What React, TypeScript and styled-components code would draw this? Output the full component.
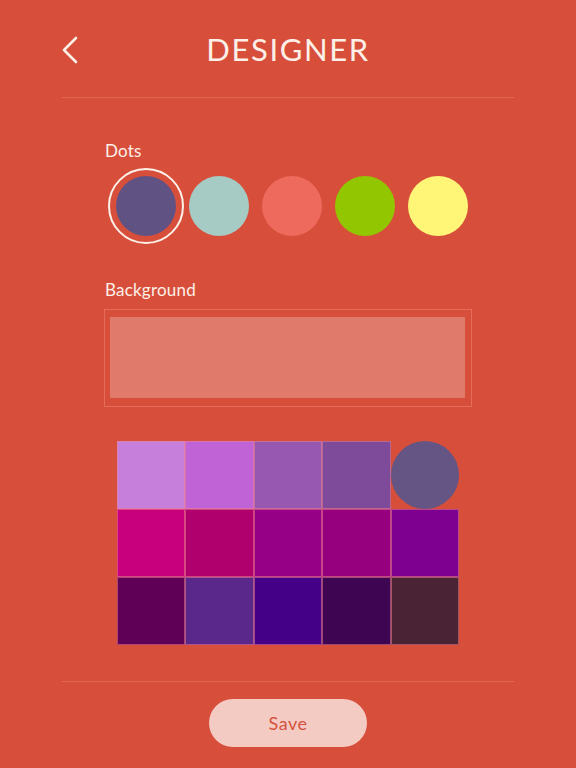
import React, { useState } from 'react'
import styled, { createGlobalStyle } from 'styled-components'

const GlobalStyle = createGlobalStyle`
   html, body {
      margin: 0;
      padding: 0;
      background: #d74f3b;
   }
   * {
      box-sizing: border-box;
   }
`

const Screen = styled.div`
   width: 576px;
   height: 768px;
   background: #d74f3b;
   font-family: Lato, 'Open Sans', sans-serif;
   color: #fcf0e8;
   overflow: hidden;
`

const Header = styled.header`
   position: relative;
   height: 97px;
   display: flex;
   align-items: center;
   justify-content: center;
`

const BackButton = styled.button`
   position: absolute;
   left: 58px;
   top: 34px;
   width: 24px;
   height: 32px;
   padding: 0;
   border: none;
   background: none;
   display: flex;
   align-items: center;
   justify-content: center;
   cursor: pointer;
`

const Title = styled.h1`
   margin: 0;
   font-size: 31px;
   font-weight: 400;
   letter-spacing: 1.6px;
   line-height: 1;
   padding-top: 2px;
`

const Divider = styled.hr`
   margin: 0 62px;
   border: none;
   height: 1px;
   background: #e1664f;
`

const Content = styled.main`
   padding: 43px 0 0 105px;
`

const Label = styled.div`
   font-size: 17px;
   line-height: 20px;
   letter-spacing: 0.2px;
`

const DotRow = styled.div`
   display: flex;
   gap: 13px;
   margin: 15px 0 0 11px;
`

const Dot = styled.button<{ $color: string; $selected?: boolean }>`
   position: relative;
   width: 60px;
   height: 60px;
   padding: 0;
   border: none;
   border-radius: 50%;
   background: ${(p) => p.$color};
   cursor: pointer;

   &::after {
      content: '';
      display: ${(p) => (p.$selected ? 'block' : 'none')};
      position: absolute;
      inset: -8px;
      border: 2.5px solid #fcf0e8;
      border-radius: 50%;
   }
`

const BackgroundLabel = styled(Label)`
   margin-top: 44px;
`

const Swatch = styled.div`
   width: 368px;
   height: 98px;
   margin: 9px 0 0 -1px;
   padding: 7px 6px 8px 5px;
   border: 1px solid #e56c5a;
`

const SwatchFill = styled.div<{ $color: string }>`
   width: 100%;
   height: 100%;
   background: ${(p) => p.$color};
`

const Palette = styled.div`
   display: grid;
   grid-template-columns: repeat(5, 68.4px);
   grid-auto-rows: 68px;
   margin: 34px 0 0 12px;
`

const Cell = styled.button<{ $color: string; $selected?: boolean }>`
   padding: 0;
   border: ${(p) => (p.$selected ? 'none' : '0.5px solid rgba(238, 128, 140, 0.55)')};
   border-radius: ${(p) => (p.$selected ? '50%' : '0')};
   background: ${(p) => p.$color};
   cursor: pointer;
`

const Footer = styled.footer`
   margin-top: 36px;
`

const SaveRow = styled.div`
   display: flex;
   justify-content: center;
   padding-top: 17px;
`

const SaveButton = styled.button`
   width: 158px;
   height: 48px;
   border: none;
   border-radius: 24px;
   background: #f4cbc3;
   color: #d4523f;
   font-family: Lato, 'Open Sans', sans-serif;
   font-size: 18px;
   letter-spacing: 0.5px;
   cursor: pointer;
`

const dotColors = ['#615284', '#a5cbc4', '#ee6a5d', '#92c600', '#fff677']

const paletteColors = [
   '#c77fdc', '#bf63d6', '#9658b0', '#7e4a9a', '#655584',
   '#c8007e', '#b0006e', '#950086', '#96007f', '#7e0090',
   '#5f0056', '#5a278b', '#440086', '#3e0553', '#4a2334',
]

export default function App() {
   const [dot, setDot] = useState(0)
   const [bg, setBg] = useState(4)

   return (
      <Screen>
         <GlobalStyle />
         <Header>
            <BackButton aria-label="Back">
               <svg width="16" height="28" viewBox="0 0 16 28">
                  <polyline
                     points="14,2 2,14 14,26"
                     fill="none"
                     stroke="#fcf0e8"
                     strokeWidth="2.6"
                     strokeLinecap="round"
                     strokeLinejoin="round"
                  />
               </svg>
            </BackButton>
            <Title>DESIGNER</Title>
         </Header>
         <Divider />

         <Content>
            <Label>Dots</Label>
            <DotRow>
               {dotColors.map((c, i) => (
                  <Dot
                     key={c}
                     $color={c}
                     $selected={i === dot}
                     onClick={() => setDot(i)}
                  />
               ))}
            </DotRow>

            <BackgroundLabel>Background</BackgroundLabel>
            <Swatch>
               <SwatchFill $color="#e07a6b" />
            </Swatch>

            <Palette>
               {paletteColors.map((c, i) => (
                  <Cell
                     key={i}
                     $color={c}
                     $selected={i === bg}
                     onClick={() => setBg(i)}
                  />
               ))}
            </Palette>
         </Content>

         <Footer>
            <Divider />
            <SaveRow>
               <SaveButton>Save</SaveButton>
            </SaveRow>
         </Footer>
      </Screen>
   )
}
